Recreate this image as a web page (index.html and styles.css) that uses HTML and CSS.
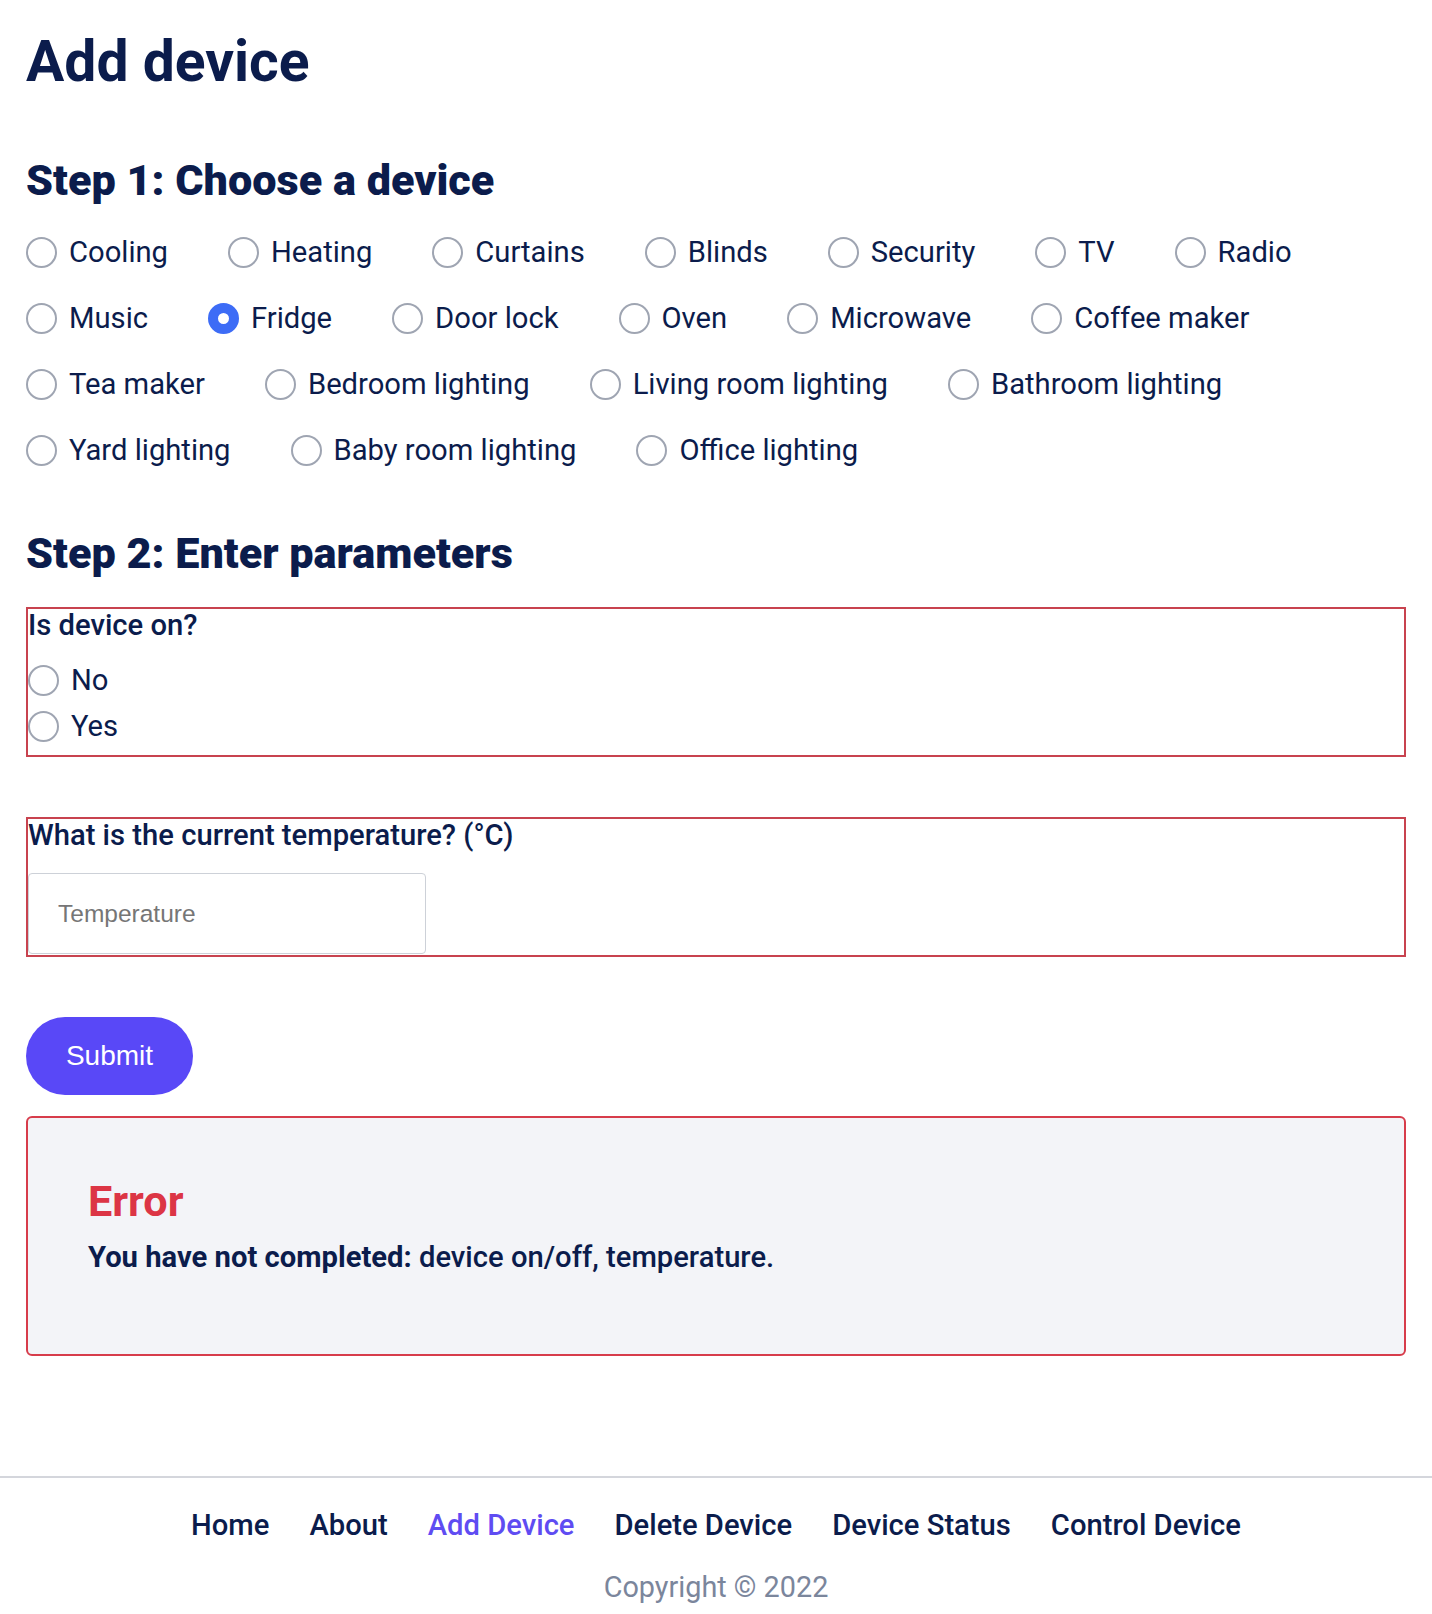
FILE: index.html
```html
<!DOCTYPE html>
<html lang="en">
<head>
<meta charset="utf-8">
<title>Add device</title>
<link rel="stylesheet" href="styles.css">
</head>
<body>
<main class="page">
  <h1 class="title">Add device</h1>

  <h2 class="step">Step 1: Choose a device</h2>
  <div class="choices">
    <label class="choice"><input class="radio" type="radio" name="device"><span>Cooling</span></label>
    <label class="choice"><input class="radio" type="radio" name="device"><span>Heating</span></label>
    <label class="choice"><input class="radio" type="radio" name="device"><span>Curtains</span></label>
    <label class="choice"><input class="radio" type="radio" name="device"><span>Blinds</span></label>
    <label class="choice"><input class="radio" type="radio" name="device"><span>Security</span></label>
    <label class="choice"><input class="radio" type="radio" name="device"><span>TV</span></label>
    <label class="choice"><input class="radio" type="radio" name="device"><span>Radio</span></label>
    <label class="choice"><input class="radio" type="radio" name="device"><span>Music</span></label>
    <label class="choice"><input class="radio" type="radio" name="device" checked><span>Fridge</span></label>
    <label class="choice"><input class="radio" type="radio" name="device"><span>Door lock</span></label>
    <label class="choice"><input class="radio" type="radio" name="device"><span>Oven</span></label>
    <label class="choice"><input class="radio" type="radio" name="device"><span>Microwave</span></label>
    <label class="choice"><input class="radio" type="radio" name="device"><span>Coffee maker</span></label>
    <label class="choice"><input class="radio" type="radio" name="device"><span>Tea maker</span></label>
    <label class="choice"><input class="radio" type="radio" name="device"><span>Bedroom lighting</span></label>
    <label class="choice"><input class="radio" type="radio" name="device"><span>Living room lighting</span></label>
    <label class="choice"><input class="radio" type="radio" name="device"><span>Bathroom lighting</span></label>
    <label class="choice"><input class="radio" type="radio" name="device"><span>Yard lighting</span></label>
    <label class="choice"><input class="radio" type="radio" name="device"><span>Baby room lighting</span></label>
    <label class="choice"><input class="radio" type="radio" name="device"><span>Office lighting</span></label>
  </div>

  <h2 class="step step-two">Step 2: Enter parameters</h2>
  <form class="params">
    <div class="field field-on">
      <div class="field-label">Is device on?</div>
      <div class="options">
        <label class="choice"><input class="radio" type="radio" name="on"><span>No</span></label>
        <label class="choice"><input class="radio" type="radio" name="on"><span>Yes</span></label>
      </div>
    </div>

    <div class="field field-temp">
      <div class="field-label">What is the current temperature? (°C)</div>
      <input class="text-input" type="text" placeholder="Temperature">
    </div>

    <button class="submit" type="button">Submit</button>
  </form>

  <section class="error">
    <h3 class="error-title">Error</h3>
    <p class="error-text"><strong>You have not completed:</strong> device on/off, temperature.</p>
  </section>
</main>

<footer class="footer">
  <nav class="nav">
    <a class="nav-link" href="#">Home</a>
    <a class="nav-link" href="#">About</a>
    <a class="nav-link nav-active" href="#">Add Device</a>
    <a class="nav-link" href="#">Delete Device</a>
    <a class="nav-link" href="#">Device Status</a>
    <a class="nav-link" href="#">Control Device</a>
  </nav>
  <p class="copyright">Copyright © 2022</p>
</footer>
</body>
</html>
```

FILE: styles.css
```css
* {
  box-sizing: border-box;
}

body {
  margin: 0;
  background: #ffffff;
  color: #0b1c4c;
  font-family: Roboto, "Liberation Sans", Arial, sans-serif;
  font-size: 29.2px;
}

.page {
  padding: 27px 26px 0;
}

.title {
  margin: 0;
  font-size: 57px;
  line-height: 70px;
  font-weight: 700;
}

.step {
  margin: 57px 0 0;
  font-size: 43.2px;
  line-height: 54px;
  font-weight: 900;
}

.step-two {
  margin-top: 60px;
}

.choices {
  display: flex;
  flex-wrap: wrap;
  column-gap: 60px;
  row-gap: 32px;
  margin-top: 27px;
}

.choice {
  display: flex;
  align-items: center;
  gap: 12px;
  font-size: 29.2px;
  line-height: 34px;
  font-weight: 400;
}

.radio {
  appearance: none;
  -webkit-appearance: none;
  margin: 0;
  width: 31px;
  height: 31px;
  flex: none;
  border: 2px solid #9fa5b2;
  border-radius: 50%;
  background: #ffffff;
}

.radio:checked {
  border: 10px solid #3d6cf6;
}

.params {
  margin-top: 26px;
}

.field {
  border: 2px solid #c8434f;
}

.field-on {
  padding-bottom: 12px;
}

.field-temp {
  margin-top: 60px;
  padding-bottom: 1px;
}

.field-label {
  font-size: 29.2px;
  line-height: 32px;
  font-weight: 500;
}

.options {
  display: flex;
  flex-direction: column;
  gap: 12px;
  margin-top: 22px;
}

.text-input {
  display: block;
  margin-top: 22px;
  width: 398px;
  height: 81px;
  padding: 0 29px;
  border: 1.5px solid #cdd1d8;
  border-radius: 4px;
  font-family: "Liberation Sans", Arial, sans-serif;
  font-size: 24.5px;
  color: #0b1c4c;
}

.text-input::placeholder {
  color: #767676;
}

.submit {
  display: block;
  margin-top: 60px;
  width: 167px;
  height: 78px;
  border: none;
  border-radius: 39px;
  background: #5948f7;
  color: #ffffff;
  font-family: "Liberation Sans", Arial, sans-serif;
  font-size: 28px;
}

.error {
  margin-top: 21px;
  padding: 59px 60px 81px;
  border: 2px solid #d73c4b;
  border-radius: 6px;
  background: #f3f4f8;
}

.error-title {
  margin: 0;
  font-size: 43.2px;
  line-height: 50px;
  font-weight: 700;
  color: #dc3545;
}

.error-text {
  margin: 14px 0 0;
  font-size: 29.2px;
  line-height: 32px;
  font-weight: 500;
}

.error-text strong {
  font-weight: 700;
}

.footer {
  margin-top: 120px;
  border-top: 2px solid #d4d6dc;
  padding: 31px 0 11px;
  text-align: center;
}

.nav {
  display: flex;
  justify-content: center;
  gap: 40px;
}

.nav-link {
  font-size: 29.2px;
  line-height: 32px;
  font-weight: 500;
  color: #0b1c4c;
  text-decoration: none;
}

.nav-active {
  color: #5f4cf2;
}

.copyright {
  margin: 30px 0 0;
  font-size: 28.8px;
  line-height: 32px;
  color: #7b869c;
}
```
